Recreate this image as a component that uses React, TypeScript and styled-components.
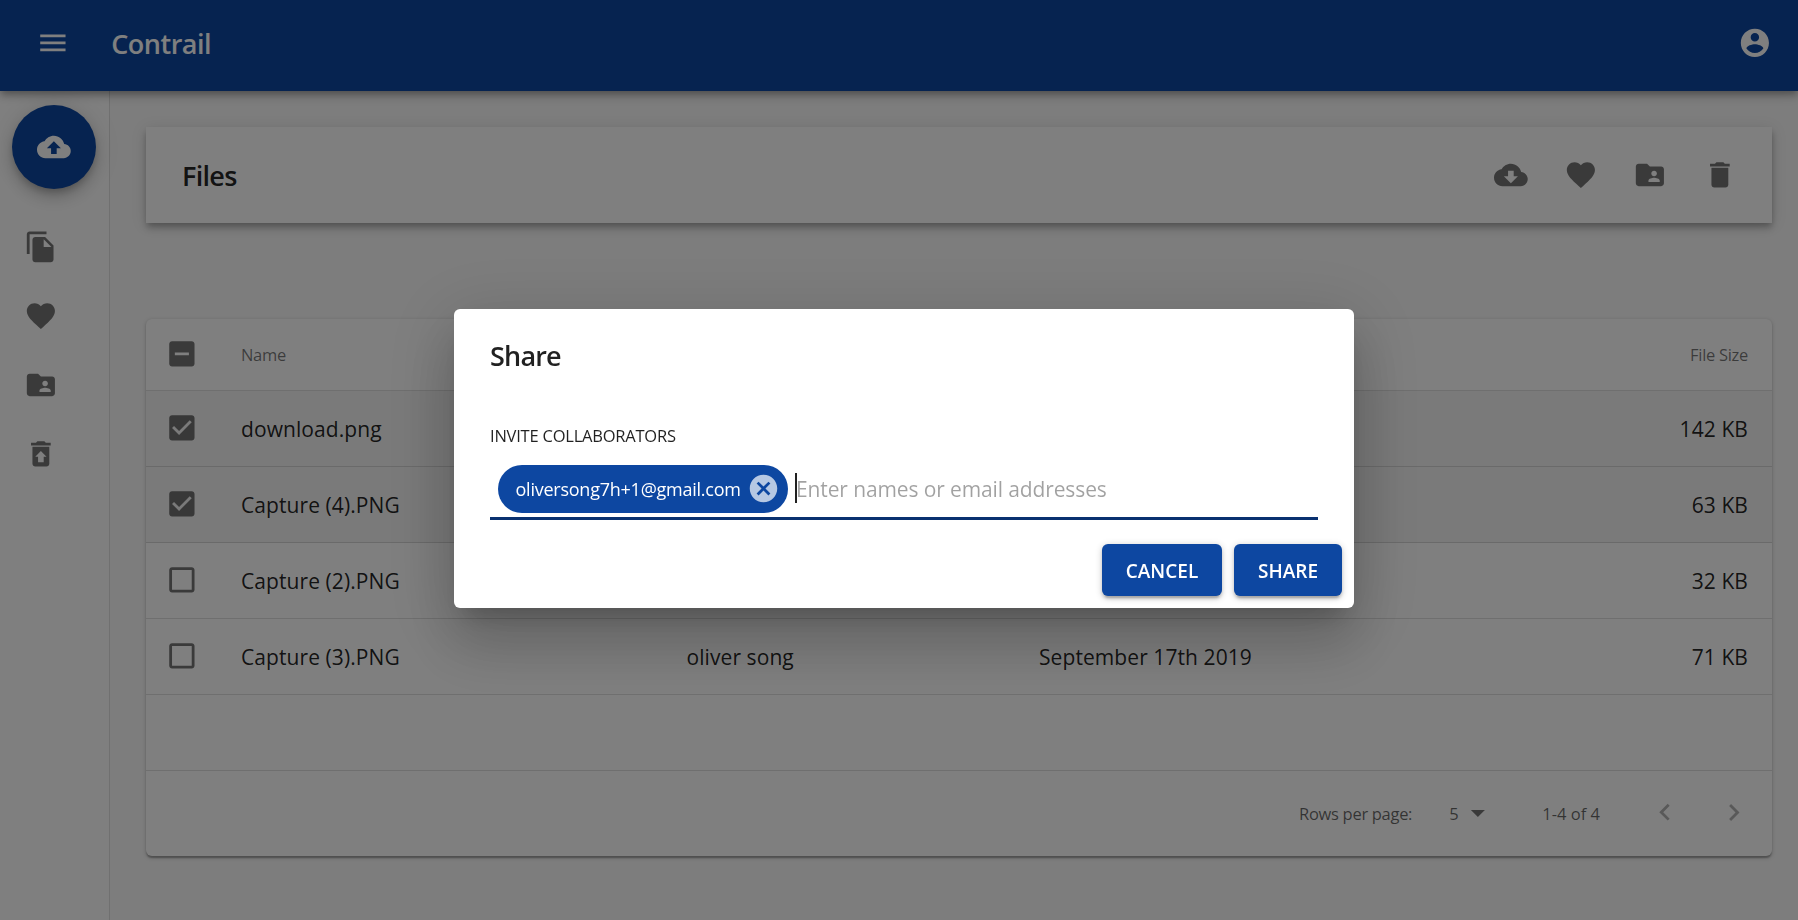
import React from "react";
import styled, { createGlobalStyle } from "styled-components";

const GlobalStyle = createGlobalStyle`
  * { box-sizing: border-box; }
  body {
    margin: 0;
    background: #fafafa;
    color: rgba(0, 0, 0, 0.87);
    font-family: "Open Sans", "Noto Sans", sans-serif;
    overflow: hidden;
  }
  button { font-family: inherit; border: 0; padding: 0; background: none; }
`;

const ICONS = {
  menu: "M3 18h18v-2H3v2zm0-5h18v-2H3v2zm0-7v2h18V6H3z",
  account:
    "M12 2C6.48 2 2 6.48 2 12s4.48 10 10 10 10-4.48 10-10S17.52 2 12 2zm0 3c1.66 0 3 1.34 3 3s-1.34 3-3 3-3-1.34-3-3 1.34-3 3-3zm0 14.2c-2.5 0-4.71-1.28-6-3.22.03-1.99 4-3.08 6-3.08 1.99 0 5.97 1.09 6 3.08-1.29 1.94-3.5 3.22-6 3.22z",
  upload:
    "M19.35 10.04C18.67 6.59 15.64 4 12 4 9.11 4 6.6 5.64 5.35 8.04 2.34 8.36 0 10.91 0 14c0 3.31 2.69 6 6 6h13c2.76 0 5-2.24 5-5 0-2.64-2.05-4.78-4.65-4.96zM14 13v4h-4v-4H7l5-5 5 5h-3z",
  download:
    "M19.35 10.04C18.67 6.59 15.64 4 12 4 9.11 4 6.6 5.64 5.35 8.04 2.34 8.36 0 10.91 0 14c0 3.31 2.69 6 6 6h13c2.76 0 5-2.24 5-5 0-2.64-2.05-4.78-4.65-4.96zM17 13l-5 5-5-5h3V9h4v4h3z",
  files:
    "M16 1H4c-1.1 0-2 .9-2 2v14h2V3h12V1zm-1 4l6 6v10c0 1.1-.9 2-2 2H7.99C6.89 23 6 22.1 6 21l.01-14c0-1.1.89-2 1.99-2h7zm-1 7h5.5L14 6.5V12z",
  heart:
    "M12 21.35l-1.45-1.32C5.4 15.36 2 12.28 2 8.5 2 5.42 4.42 3 7.5 3c1.74 0 3.41.81 4.5 2.09C13.09 3.81 14.76 3 16.5 3 19.58 3 22 5.42 22 8.5c0 3.78-3.4 6.86-8.55 11.54L12 21.35z",
  shared:
    "M20 6h-8l-2-2H4c-1.1 0-1.99.9-1.99 2L2 18c0 1.1.9 2 2 2h16c1.1 0 2-.9 2-2V8c0-1.1-.9-2-2-2zm-5 3c1.1 0 2 .9 2 2s-.9 2-2 2-2-.9-2-2 .9-2 2-2zm4 8h-8v-1c0-1.33 2.67-2 4-2s4 .67 4 2v1z",
  restore:
    "M19 4h-3.5l-1-1h-5l-1 1H5v2h14V4zM6 7v12c0 1.1.9 2 2 2h8c1.1 0 2-.9 2-2V7H6zm8 7v4h-4v-4H8l4-4 4 4h-2z",
  trash: "M6 19c0 1.1.9 2 2 2h8c1.1 0 2-.9 2-2V7H6v12zM19 4h-3.5l-1-1h-5l-1 1H5v2h14V4z",
  some: "M19 3H5c-1.1 0-2 .9-2 2v14c0 1.1.9 2 2 2h14c1.1 0 2-.9 2-2V5c0-1.1-.9-2-2-2zm-2 10H7v-2h10v2z",
  on: "M19 3H5c-1.11 0-2 .9-2 2v14c0 1.1.89 2 2 2h14c1.11 0 2-.9 2-2V5c0-1.1-.89-2-2-2zm-9 14l-5-5 1.41-1.41L10 14.17l7.59-7.59L19 8l-9 9z",
  off: "M19 5v14H5V5h14m0-2H5c-1.1 0-2 .9-2 2v14c0 1.1.9 2 2 2h14c1.1 0 2-.9 2-2V5c0-1.1-.9-2-2-2z",
  cancel:
    "M12 2C6.47 2 2 6.47 2 12s4.47 10 10 10 10-4.47 10-10S17.53 2 12 2zm5 13.59L15.59 17 12 13.41 8.41 17 7 15.59 10.59 12 7 8.41 8.41 7 12 10.59 15.59 7 17 8.41 13.41 12 17 15.59z",
  drop: "M7 10l5 5 5-5z",
  left: "M15.41 16.09l-4.58-4.59 4.58-4.59L14 5.5l-6 6 6 6z",
  right: "M8.59 16.34l4.58-4.59-4.58-4.59L10 5.75l6 6-6 6z",
};
type IconName = keyof typeof ICONS;

const Svg = styled.svg<{ $size: number }>`
  width: ${(p) => p.$size}px;
  height: ${(p) => p.$size}px;
  fill: currentColor;
  flex: none;
  display: block;
`;
const Icon = ({ name, size = 33.75 }: { name: IconName; size?: number }) => (
  <Svg viewBox="0 0 24 24" $size={size}>
    <path d={ICONS[name]} />
  </Svg>
);

const Page = styled.div`
  width: 100%;
  height: 920px;
  display: flex;
  flex-direction: column;
`;

const AppBar = styled.header`
  height: 91px;
  flex: none;
  position: relative;
  z-index: 2;
  display: flex;
  align-items: center;
  padding: 0 26px 5px 35.5px;
  background: #0d47a1;
  color: #fff;
  box-shadow: 0 3px 6px -1.5px rgba(0, 0, 0, 0.2), 0 6px 7.5px rgba(0, 0, 0, 0.14),
    0 1.5px 15px rgba(0, 0, 0, 0.12);
`;
const Brand = styled.h1`
  margin: 1px auto 0 42px;
  font-size: 27px;
  line-height: 40px;
  font-weight: 600;
  letter-spacing: -0.5px;
`;

const Body = styled.div`
  flex: 1;
  min-height: 0;
  display: flex;
`;
const Sidebar = styled.nav`
  width: 110px;
  flex: none;
  background: #fff;
  border-right: 1px solid rgba(0, 0, 0, 0.12);
  padding-top: 14px;
`;
const Fab = styled.button`
  width: 84px;
  height: 84px;
  margin-left: 12px;
  border-radius: 50%;
  background: #0d47a1;
  color: #fff;
  display: flex;
  align-items: center;
  justify-content: center;
  box-shadow: 0 4.5px 7.5px -1.5px rgba(0, 0, 0, 0.2), 0 9px 15px rgba(0, 0, 0, 0.14),
    0 1.5px 27px rgba(0, 0, 0, 0.12);
`;
const NavList = styled.div`
  margin-top: 23.5px;
  color: rgba(0, 0, 0, 0.54);
`;
const NavItem = styled.div`
  height: 69px;
  padding-left: 23.5px;
  display: flex;
  align-items: center;
`;

const Main = styled.main`
  flex: 1;
  padding: 36px 26px 0 36px;
`;
const Toolbar = styled.section`
  height: 96px;
  display: flex;
  align-items: center;
  padding: 0 17.5px 0 36px;
  background: #fff;
  box-shadow: 0 3px 6px -1.5px rgba(0, 0, 0, 0.2), 0 6px 7.5px rgba(0, 0, 0, 0.14),
    0 1.5px 15px rgba(0, 0, 0, 0.12);
`;
const Heading = styled.h2`
  margin: 2px auto 0 0;
  font-size: 27px;
  line-height: 40px;
  font-weight: 600;
  letter-spacing: -0.7px;
`;
const ToolButton = styled.button`
  width: 69.6px;
  height: 69.6px;
  display: flex;
  align-items: center;
  justify-content: center;
  color: rgba(0, 0, 0, 0.54);
`;

const Card = styled.section`
  margin-top: 96px;
  height: 537px;
  background: #fff;
  border-radius: 6px;
  overflow: hidden;
  box-shadow: 0 1.5px 4.5px rgba(0, 0, 0, 0.2), 0 1.5px 1.5px rgba(0, 0, 0, 0.14),
    0 3px 1.5px -1.5px rgba(0, 0, 0, 0.12);
`;
const Row = styled.div<{ $head?: boolean; $selected?: boolean }>`
  height: ${(p) => (p.$head ? 72 : 76)}px;
  display: grid;
  grid-template-columns: 95px 445.5px 352.5px 1fr auto;
  align-items: center;
  padding: 0 24px 0 0;
  background: ${(p) => (p.$selected ? "rgba(0, 0, 0, 0.04)" : "transparent")};
  border-bottom: 1px solid rgba(0, 0, 0, 0.13);
  font-size: ${(p) => (p.$head ? 16.5 : 21)}px;
  letter-spacing: ${(p) => (p.$head ? -0.3 : 0.08)}px;
  color: ${(p) => (p.$head ? "rgba(0, 0, 0, 0.54)" : "rgba(0, 0, 0, 0.87)")};
`;
const Check = styled.span`
  padding-left: 18.5px;
  margin-top: -1px;
  color: rgba(0, 0, 0, 0.54);
`;
const Footer = styled.div`
  height: 85px;
  display: flex;
  align-items: center;
  font-size: 16.5px;
  color: rgba(0, 0, 0, 0.6);
  padding-right: 21px;
`;
const FootText = styled.span<{ $ls: number; $mr: number; $push?: boolean }>`
  letter-spacing: ${(p) => p.$ls}px;
  margin: 0 ${(p) => p.$mr}px 0 ${(p) => (p.$push ? "auto" : "0")};
`;
const FootIcon = styled.span<{ $mr: number; $faded?: boolean }>`
  margin: -1px ${(p) => p.$mr}px 0 0;
  color: rgba(0, 0, 0, ${(p) => (p.$faded ? 0.3 : 0.54)});
`;

const Backdrop = styled.div`
  position: fixed;
  inset: 0;
  z-index: 10;
  display: flex;
  justify-content: center;
  align-items: flex-start;
  padding: 309px 0 0 10px;
  background: rgba(0, 0, 0, 0.5);
`;
const Dialog = styled.div`
  width: 900px;
  height: 299px;
  display: flex;
  flex-direction: column;
  background: #fff;
  border-radius: 6px;
  box-shadow: 0 16.5px 22.5px -10.5px rgba(0, 0, 0, 0.2), 0 36px 57px 4.5px rgba(0, 0, 0, 0.14),
    0 13.5px 69px 12px rgba(0, 0, 0, 0.12);
`;
const DialogTitle = styled.h2`
  margin: 27px 36px 0;
  font-size: 27px;
  line-height: 40px;
  font-weight: 600;
  letter-spacing: -0.8px;
`;
const Label = styled.div`
  margin: 47px 36px 0;
  font-size: 16.5px;
  line-height: 26px;
  letter-spacing: -0.22px;
`;
const Field = styled.div`
  margin: 16px 36px 0;
  height: 55px;
  padding: 0 0 4px 8px;
  display: flex;
  align-items: center;
  border-bottom: 3px solid #093170;
`;
const Chip = styled.div`
  width: 290px;
  height: 48px;
  padding: 0 8px 0 17.5px;
  border-radius: 24px;
  background: #0d47a1;
  color: #fff;
  font-size: 18px;
  letter-spacing: -0.24px;
  display: flex;
  align-items: center;
  justify-content: space-between;
`;
const ChipClose = styled.span`
  color: rgba(255, 255, 255, 0.7);
  margin-top: -1px;
`;
const Caret = styled.span`
  width: 2px;
  height: 30px;
  margin: -2px -1px 0 7px;
  background: #212121;
`;
const Placeholder = styled.span`
  font-size: 21px;
  letter-spacing: -0.12px;
  margin-top: -1px;
  color: rgba(0, 0, 0, 0.37);
`;
const Actions = styled.div`
  display: flex;
  justify-content: flex-end;
  gap: 12px;
  padding: 24px 12px 0 0;
`;
const Action = styled.button<{ $w: number }>`
  width: ${(p) => p.$w}px;
  height: 52px;
  padding-top: 2px;
  border-radius: 6px;
  background: #0d47a1;
  color: #fff;
  font-size: 19px;
  font-weight: 600;
  letter-spacing: 0;
  box-shadow: 0 1.5px 7.5px rgba(0, 0, 0, 0.2), 0 3px 3px rgba(0, 0, 0, 0.14),
    0 4.5px 1.5px -3px rgba(0, 0, 0, 0.12);
`;

const files = [
  { name: "download.png", size: "142 KB", selected: true },
  { name: "Capture (4).PNG", size: "63 KB", selected: true },
  { name: "Capture (2).PNG", size: "32 KB" },
  { name: "Capture (3).PNG", size: "71 KB", owner: "oliver song", date: "September 17th 2019" },
];
const nav: IconName[] = ["files", "heart", "shared", "restore"];
const tools: IconName[] = ["download", "heart", "shared", "trash"];

export default function App() {
  return (
    <>
      <GlobalStyle />
      <Page>
        <AppBar>
          <Icon name="menu" />
          <Brand>Contrail</Brand>
          <Icon name="account" />
        </AppBar>
        <Body>
          <Sidebar>
            <Fab>
              <Icon name="upload" />
            </Fab>
            <NavList>
              {nav.map((n) => (
                <NavItem key={n}>
                  <Icon name={n} />
                </NavItem>
              ))}
            </NavList>
          </Sidebar>
          <Main>
            <Toolbar>
              <Heading>Files</Heading>
              {tools.map((n) => (
                <ToolButton key={n}>
                  <Icon name={n} />
                </ToolButton>
              ))}
            </Toolbar>
            <Card>
              <Row $head>
                <Check>
                  <Icon name="some" />
                </Check>
                <span>Name</span>
                <span />
                <span />
                <span>File Size</span>
              </Row>
              {files.map((f) => (
                <Row key={f.name} $selected={f.selected}>
                  <Check>
                    <Icon name={f.selected ? "on" : "off"} />
                  </Check>
                  <span>{f.name}</span>
                  <span>{f.owner}</span>
                  <span>{f.date}</span>
                  <span>{f.size}</span>
                </Row>
              ))}
              <Row />
              <Footer>
                <FootText $ls={-0.3} $mr={37} $push>
                  Rows per page:
                </FootText>
                <FootText $ls={0} $mr={2}>
                  5
                </FootText>
                <FootIcon $mr={48}>
                  <Icon name="drop" />
                </FootIcon>
                <FootText $ls={0} $mr={47.5}>
                  1-4 of 4
                </FootText>
                <FootIcon $mr={36} $faded>
                  <Icon name="left" />
                </FootIcon>
                <FootIcon $mr={0} $faded>
                  <Icon name="right" />
                </FootIcon>
              </Footer>
            </Card>
          </Main>
        </Body>
      </Page>
      <Backdrop>
        <Dialog>
          <DialogTitle>Share</DialogTitle>
          <Label>INVITE COLLABORATORS</Label>
          <Field>
            <Chip>
              oliversong7h+1@gmail.com
              <ChipClose>
                <Icon name="cancel" size={33} />
              </ChipClose>
            </Chip>
            <Caret />
            <Placeholder>Enter names or email addresses</Placeholder>
          </Field>
          <Actions>
            <Action $w={120}>CANCEL</Action>
            <Action $w={108}>SHARE</Action>
          </Actions>
        </Dialog>
      </Backdrop>
    </>
  );
}
